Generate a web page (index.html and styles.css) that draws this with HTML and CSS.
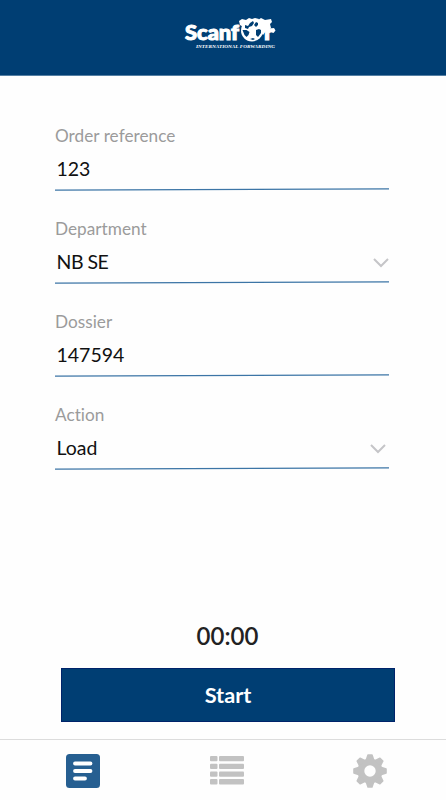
FILE: index.html
```
<!DOCTYPE html>
<html lang="en">
<head>
<meta charset="utf-8">
<title>Scanfor</title>
<link rel="stylesheet" href="styles.css">
</head>
<body>
<header class="header">
  <svg class="logo" viewBox="0 0 100 40" role="img" aria-label="Scanfor International Forwarding">
    <g fill="#fff">
      <text class="logo-name" x="5" y="26.500" textLength="54" lengthAdjust="spacingAndGlyphs">Scanf</text>
      <text class="logo-name" x="84" y="26.500" textLength="9" lengthAdjust="spacingAndGlyphs">r</text>
      <circle cx="72" cy="17.500" r="11"/>
      <path d="M59 8l3-2 4 1 3-2 3 1 3-1 4 1-1 4-5 2-8 3-5-3z"/>
      <path d="M78 7l3-2 4 2 6-1 1 3-2 2 1 4-2 4-3-1-3 4-3-4-3-4z"/>
      <path d="M91 15.500l3-.500 1.500 2.500-2 2.500-2.500-1z"/>
    </g>
    <path fill="#003e73" d="M65 12l3 1 2-3 3-2 1 2-2 3-3 1-1 2-3-1zM76 9l2 1 0 2-2 2-2-2zM62.500 17l4 0 3 2-1 3-2 2-2-2zM76 17l3-1 2 1 0 3-3 4-2-2 0-3zM70 26l3-1 2 1-2 1z"/>
    <text class="logo-tag" x="16" y="35" textLength="79" lengthAdjust="spacingAndGlyphs">INTERNATIONAL FORWARDING</text>
  </svg>
</header>
<main class="form">
  <section class="field">
    <div class="label">Order reference</div>
    <div class="value"><span>123</span></div>
    <svg class="rule" viewBox="0 0 334 3"><path d="M0 2.100L334 .900"/></svg>
  </section>
  <section class="field">
    <div class="label">Department</div>
    <div class="value department"><span>NB SE</span>
      <svg class="chevron" viewBox="0 0 16 10"><path d="M1 1l7 7 7-7"/></svg></div>
    <svg class="rule" viewBox="0 0 334 3"><path d="M0 2.100L334 .900"/></svg>
  </section>
  <section class="field">
    <div class="label">Dossier</div>
    <div class="value"><span>147594</span></div>
    <svg class="rule" viewBox="0 0 334 3"><path d="M0 2.100L334 .900"/></svg>
  </section>
  <section class="field">
    <div class="label">Action</div>
    <div class="value action"><span>Load</span>
      <svg class="chevron" viewBox="0 0 16 10"><path d="M1 1l7 7 7-7"/></svg></div>
    <svg class="rule" viewBox="0 0 334 3"><path d="M0 2.100L334 .900"/></svg>
  </section>
</main>
<div class="timer">00:00</div>
<button class="start">Start</button>
<nav class="tabs">
  <svg class="tab" viewBox="0 0 34 34"><rect width="34" height="34" rx="3.500" fill="#265f91"/><path d="M9 9.500h15.500M9 17h15.500M9 24.500h10" stroke="#fff" stroke-width="3.800" stroke-linecap="round"/></svg>
  <svg class="tab" viewBox="0 0 34 34" fill="#c2c2c2"><rect y="2" width="7.500" height="5.300" rx="1"/><rect x="9" y="2" width="25" height="5.300" rx="1"/><rect y="9.700" width="7.500" height="5.300" rx="1"/><rect x="9" y="9.700" width="25" height="5.300" rx="1"/><rect y="17.400" width="7.500" height="5.300" rx="1"/><rect x="9" y="17.400" width="25" height="5.300" rx="1"/><rect y="25.100" width="7.500" height="5.300" rx="1"/><rect x="9" y="25.100" width="25" height="5.300" rx="1"/></svg>
  <svg class="tab" viewBox="-17 -17 34 34" fill="#c2c2c2">
    <defs><path id="tooth" d="M-4.500-11L-2.700-16.300Q-2.500-16.800-2-16.800H2Q2.500-16.800 2.700-16.300L4.500-11z"/></defs>
    <circle r="9.100" fill="none" stroke="#c2c2c2" stroke-width="6.800"/>
    <use href="#tooth"/><use href="#tooth" transform="rotate(45)"/><use href="#tooth" transform="rotate(90)"/><use href="#tooth" transform="rotate(135)"/><use href="#tooth" transform="rotate(180)"/><use href="#tooth" transform="rotate(225)"/><use href="#tooth" transform="rotate(270)"/><use href="#tooth" transform="rotate(315)"/>
  </svg>
</nav>
</body>
</html>
```
FILE: styles.css
```
* { box-sizing: border-box; }
body {
  margin: 0;
  height: 800px;
  overflow: hidden;
  display: flex;
  flex-direction: column;
  background: #fefefe;
  font-family: Lato, "Liberation Sans", sans-serif;
}
.header {
  height: 76px;
  flex: none;
  display: flex;
  justify-content: center;
  padding: 13px 0 0 14px;
  background: #003e73;
  border-bottom: 1px solid #547fa3;
}
.logo { width: 100px; height: 40px; }
.logo-name { font: 900 20px Lato, sans-serif; stroke: #fff; stroke-width: 1px; }
.logo-tag { font: italic bold 5px "Liberation Serif", serif; fill: #fff; }
.form { padding: 48px 57px 0 55px; height: 542px; flex: none; }
.field { height: 93px; }
.label {
  height: 24px;
  font-size: 17.2px;
  line-height: 24px;
  letter-spacing: .03px;
  font-variant-ligatures: none;
  color: #9b9b9b;
}
.value {
  height: 40px;
  display: flex;
  justify-content: space-between;
  align-items: center;
  padding: 0 0 0 1.5px;
  font-size: 19.5px;
  color: #111;
}
.department { letter-spacing: -.5px; }
.chevron { width: 16px; height: 10px; margin-top: 3px; }
.action .chevron { margin-right: 3px; }
.chevron path { fill: none; stroke: #c5c5c8; stroke-width: 2; }
.rule { display: block; width: 334px; height: 3px; }
.rule path { stroke: #3c75a6; stroke-width: 1.2; }
.timer {
  height: 50px;
  padding-left: 9px;
  text-align: center;
  font-size: 24px;
  font-weight: 600;
  line-height: 36px;
  color: #222;
}
.start {
  flex: none;
  width: 334px;
  height: 54px;
  margin-left: 61px;
  padding: 0;
  border: 1px solid #00236a;
  background: #003e73;
  color: #fff;
  font: bold 21.7px Lato, sans-serif;
}
.tabs {
  height: 61px;
  margin-top: 17.500px;
  display: flex;
  justify-content: space-between;
  padding: 14px 59px 0 66px;
  border-top: 1.500px solid #dcdcdc;
}
.tab { width: 34px; height: 34px; }
```
